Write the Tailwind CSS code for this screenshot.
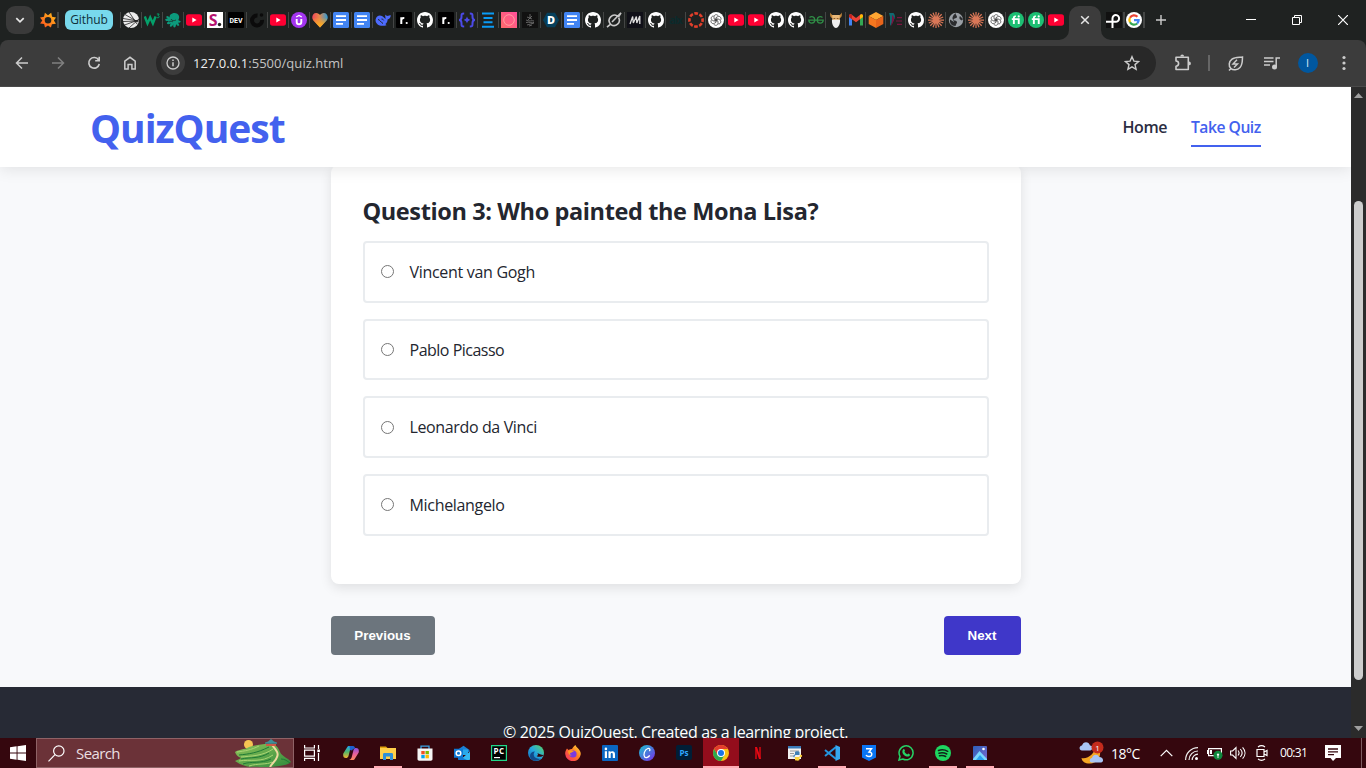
<!DOCTYPE html>
<html lang="en">
<head>
<meta charset="utf-8">
<title>QuizQuest</title>
<script src="https://cdn.jsdelivr.net/npm/@tailwindcss/browser@4"></script>
</head>
<body class="w-[1366px] h-[768px] overflow-hidden bg-[#f8f9fb] font-['Open_Sans',sans-serif]">
<svg class="absolute w-0 h-0">
  <defs>
  <linearGradient id="gOr" x1="0" y1="1" x2="1" y2="0"><stop offset="0" stop-color="#ff4b1f"/><stop offset="1" stop-color="#ffc21a"/></linearGradient>
  <linearGradient id="gHeart" x1="0" y1="0" x2="1" y2="0"><stop offset="0" stop-color="#f0465a"/><stop offset=".45" stop-color="#e8884a"/><stop offset="1" stop-color="#2b9bd8"/></linearGradient>
  <linearGradient id="gHeart2" x1="0" y1="0" x2="0" y2="1"><stop offset=".3" stop-color="#f9a825" stop-opacity="0"/><stop offset=".8" stop-color="#f9a825"/></linearGradient>
  <linearGradient id="gPink" x1="0" y1="1" x2="1" y2="0"><stop offset="0" stop-color="#ff6a6a"/><stop offset="1" stop-color="#ff4f9a"/></linearGradient>
  <linearGradient id="gEdge" x1="0" y1="1" x2="1" y2="0"><stop offset="0" stop-color="#1265b8"/><stop offset=".5" stop-color="#25a8e0"/><stop offset="1" stop-color="#5fd65a"/></linearGradient>
  <linearGradient id="gFox" x1="0" y1="1" x2="1" y2="0"><stop offset="0" stop-color="#f5246c"/><stop offset=".55" stop-color="#ff7a22"/><stop offset="1" stop-color="#ffe03a"/></linearGradient>
  <linearGradient id="gCanva" x1="0" y1="0" x2="1" y2="1"><stop offset="0" stop-color="#19c4cf"/><stop offset="1" stop-color="#7a2be8"/></linearGradient>
  <linearGradient id="gCopA" x1="0" y1="0" x2="0" y2="1"><stop offset="0" stop-color="#1ea7f2"/><stop offset=".5" stop-color="#52b56a"/><stop offset="1" stop-color="#f5b52e"/></linearGradient>
  <linearGradient id="gCopB" x1="0" y1="0" x2="0" y2="1"><stop offset="0" stop-color="#8a4fe0"/><stop offset=".5" stop-color="#e8609a"/><stop offset="1" stop-color="#ff8a5c"/></linearGradient>
  <linearGradient id="gPhoto" x1="0" y1="0" x2="1" y2="1"><stop offset="0" stop-color="#2b5fb8"/><stop offset="1" stop-color="#7a6ad0"/></linearGradient>
  <linearGradient id="gHill" x1="0" y1="0" x2="1" y2="1"><stop offset="0" stop-color="#8fc45a"/><stop offset="1" stop-color="#2f8a3c"/></linearGradient>
  </defs>
</svg>
<svg class="hidden">
  <symbol id="i-star" viewBox="0 0 16 16"><path fill="url(#gOr)" fill-rule="evenodd" d="M8 3.200 11.200.8l.9 4 3.900.7-2.100 2.900 2 3.400-4 .4-1 3.400L8 13.600l-3 2-.9-3.600-4-.4 2.200-3.200L0 5.500l4-.7.9-4zM8 5a3.300 3.300 0 1 0 0 6.600A3.300 3.300 0 0 0 8 5"/></symbol>
  <symbol id="i-ball" viewBox="0 0 16 16"><circle cx="8" cy="8" r="8" fill="#ececec"/><path stroke="#222" stroke-width=".8" fill="none" d="M0 6.500 15.500 9M2 2.500 15 10M6 0 14 12M0 9.500 15.500 9M1.500 13 15.500 8M6 16 16 7"/></symbol>
  <symbol id="i-w3" viewBox="0 0 16 16"><path fill="none" stroke="#04a06a" stroke-width="2.400" d="M.8 4.500 3.500 11.500 6.200 5.500 8.900 11.500 11.600 4.500"/><path fill="none" stroke="#04a06a" stroke-width="1" d="M12.800 2h2.400L14 3.600c1.600 0 1.600 2.400-.2 2.200l-1-.4"/></symbol>
  <symbol id="i-octo" viewBox="0 0 16 16"><path fill="#0c9a7c" d="M5.500 2.500C8 0 13 .5 14 4c.6 2-.4 3.200-.6 4 .2 1 2 .6 2.400 1.600-.4 1.400-2 1.200-2.800.8.2 1 1.600 1.800 1.200 3.200-1.400.8-2.600-.4-3-1.600-.4 1.200-.2 3-1.600 3.600-1.400 0-1.600-2-1.200-3.400-1 1.200-1.400 2.800-3 2.600-1.200-.8-.4-2.400.6-3.400-1.400.6-3 1.400-4 .4-.6-1.200.8-2.200 2.400-2.400C3 9 .8 9.600.2 8c-.2-1.400 1.600-1.400 2.800-1-.6-.8-2-1.200-1.600-2.600C2.400 3.200 3.800 4.600 4.600 5.600c0-1 0-2.200.9-3.100"/><path stroke="#1d2321" stroke-width=".7" fill="none" d="M6 7c1 2 3 2 5 1M4 10c1-1 3-1 4 0"/></symbol>
  <symbol id="i-yt" viewBox="0 0 16 16"><rect y="2.300" width="16" height="11.400" rx="2.600" fill="#ff0033"/><path d="M6.300 5.500v5L10.600 8z" fill="#fff"/></symbol>
  <symbol id="i-s" viewBox="0 0 16 16"><path fill="#fff" d="M0 0h16v16H0z"/><text x="1.800" y="13.800" font-family="Open Sans" font-weight="700" font-size="16" fill="#b5126f">S</text><circle cx="12.500" cy="12.500" r="1.700" fill="#222"/></symbol>
  <symbol id="i-dev" viewBox="0 0 16 16"><rect width="16" height="16" rx="1" fill="#000"/><text x="8" y="10.900" text-anchor="middle" textLength="13" lengthAdjust="spacingAndGlyphs" font-family="Roboto" font-weight="700" font-size="8" fill="#fff">DEV</text></symbol>
  <symbol id="i-c" viewBox="0 0 16 16"><path fill="none" stroke="#0b0b0b" stroke-width="4" d="M8.500 3.500A5 5 0 1 0 13 8"/><circle cx="12.500" cy="3" r="1.800" fill="#0b0b0b"/></symbol>
  <symbol id="i-ud" viewBox="0 0 16 16"><circle cx="8" cy="8" r="8" fill="#a435f0"/><path fill="none" stroke="#fff" stroke-width="1.900" d="M5.700 7v3a2.300 2.300 0 0 0 4.600 0V7"/><path fill="none" stroke="#fff" stroke-width="1.300" d="M5.200 5 8 3.400 10.800 5"/></symbol>
  <symbol id="i-heart" viewBox="0 0 16 16"><path fill="url(#gHeart)" d="M8 15.500 1.200 8.200C-1 5 1 1 4.200 1 6 1 7.300 2 8 3c.7-1 2-2 3.800-2C15 1 17 5 14.800 8.200z"/><path fill="url(#gHeart2)" d="M8 15.500 1.200 8.200C-1 5 1 1 4.200 1 6 1 7.300 2 8 3c.7-1 2-2 3.800-2C15 1 17 5 14.800 8.200z"/></symbol>
  <symbol id="i-doc" viewBox="0 0 16 16"><rect width="16" height="16" rx="1.500" fill="#4285f4"/><path fill="#fff" d="M3 3.200h10V5H3zm0 3.900h10v1.800H3zM3 11h7v1.800H3z"/></symbol>
  <symbol id="i-deep" viewBox="0 0 16 16"><path fill="#4d6bfe" d="M.6 7.500C1.200 4 4.500 2.500 7 4c1.500.9 2.600 2.200 3.500 3 .2-1.400-.6-2.600-.2-4.400 1 1.600 2 1.400 3 1.200.8-.2 1.400-.8 2.500-.4-.2 2.400-1.600 3.600-3.200 4 0 2-1 3.600-2.200 4.600l1.200 1.200c-3 .8-7 1-9.200-1C.8 10.800.4 9.200.6 7.500"/><path fill="none" stroke="#1d2321" d="M3 7.500c1.600 0 3 3 5 4M6.500 7c.9-.4 1.600.6 2.200 1.400"/></symbol>
  <symbol id="i-r" viewBox="0 0 16 16"><rect width="16" height="16" rx="1" fill="#000"/><path fill="none" stroke="#fff" stroke-width="2" d="M5.300 12V5.200M5.300 8c.2-1.400 1.200-2.100 3-2"/><circle cx="10.700" cy="11" r="1.100" fill="#fff"/></symbol>
  <symbol id="i-gh" viewBox="0 0 16 16"><path fill="#fff" d="M8 0C3.580 0 0 3.580 0 8c0 3.540 2.290 6.530 5.470 7.590.4.070.55-.17.55-.38 0-.19-.01-.82-.01-1.490-2.010.37-2.530-.49-2.690-.94-.09-.23-.48-.94-.82-1.130-.28-.15-.68-.52-.01-.53.630-.01 1.080.58 1.230.82.72 1.210 1.870.87 2.330.66.070-.52.280-.87.510-1.070-1.780-.2-3.640-.89-3.640-3.950 0-.87.310-1.590.82-2.150-.08-.2-.36-1.020.08-2.120 0 0 .67-.21 2.200.82.640-.18 1.320-.27 2-.27s1.360.09 2 .27c1.530-1.040 2.200-.82 2.200-.82.440 1.100.160 1.920.08 2.120.51.560.82 1.270.82 2.150 0 3.070-1.870 3.750-3.650 3.950.29.250.54.730.54 1.480 0 1.070-.01 1.930-.01 2.200 0 .21.150.46.550.38A8.010 8.010 0 0 0 16 8c0-4.420-3.580-8-8-8"/></symbol>
  <symbol id="i-br" viewBox="0 0 16 16"><path fill="none" stroke="#4c4ae8" stroke-width="2" d="M5.200 1.500c-3 0-2.700.9-2.700 3.500C2.500 7 2 7.600.5 8c1.500.4 2 1 2 3 0 2.600-.3 3.500 2.700 3.500M10.800 1.500c3 0 2.700.9 2.700 3.500 0 2 .5 2.600 2 3-1.500.4-2 1-2 3 0 2.600.3 3.500-2.700 3.500"/><path fill="#4c4ae8" d="M8 4.600c.7 2 1.200 2.700 3.400 3.400-2.200.7-2.700 1.400-3.400 3.400-.7-2-1.200-2.700-3.400-3.400 2.200-.7 2.700-1.400 3.400-3.400"/></symbol>
  <symbol id="i-bars" viewBox="0 0 16 16"><path stroke="#0a9bf5" stroke-width="2" d="M2 1.500h12M3.500 6h9M3.500 10.300h9M2 14.700h12"/></symbol>
  <symbol id="i-pink" viewBox="0 0 16 16"><path fill="url(#gPink)" d="M0 0h16v16H0z"/><circle cx="8" cy="8" r="5.300" fill="none" stroke="#ffa0a0"/></symbol>
  <symbol id="i-dark" viewBox="0 0 16 16"><path fill="#111" d="M0 0h16v16H0z"/><path fill="none" stroke="#777" stroke-width=".8" d="M8 2v4M5 5l5 2M10 4 6 8M4 8c3 2 6 0 8 1M4 10.500c3-1 6 1 8 0M5 13c2-1 5-1 7-2M7 14l3-1"/></symbol>
  <symbol id="i-d" viewBox="0 0 16 16"><path fill="#06405c" d="M4 .8h8L16 8l-4 7.200H4L0 8z"/><text x="8" y="12" text-anchor="middle" font-family="Open Sans" font-weight="800" font-size="11" fill="#fff">D</text></symbol>
  <symbol id="i-grok" viewBox="0 0 16 16"><path fill="none" stroke="#c8c8c8" stroke-width="1.600" d="M11.500 4.200A5.300 5.300 0 0 0 4.200 11.700M5 12.600A5.300 5.300 0 0 0 12.600 5.600M1 15.200l4.200-3.600M6 10 15 .8 12.400 5"/></symbol>
  <symbol id="i-m" viewBox="0 0 16 16"><path fill="#101018" d="M0 0h16v16H0z"/><path fill="none" stroke="#ddd" stroke-width="1.300" stroke-linejoin="bevel" d="M3 12 5.700 4.500l.6 6.500L9.400 4.500l.4 6.500L12.800 4v8"/></symbol>
  <symbol id="i-alx" viewBox="0 0 16 16"><text x="1" y="11.500" textLength="14" font-family="Open Sans" font-weight="700" font-size="11" fill="#0b2a2c">alx</text></symbol>
  <symbol id="i-canvas" viewBox="0 0 16 16"><circle cx="8" cy="8" r="6.600" fill="none" stroke="#e13f2b" stroke-width="2.600" stroke-dasharray="3.700 1.480" stroke-dashoffset="1.850"/></symbol>
  <symbol id="i-gpt" viewBox="0 0 16 16"><circle cx="8" cy="8" r="8" fill="#fff"/><g fill="none" stroke="#444" stroke-width=".75"><path id="pet" d="M6 6.800V4.900c0-2.600 3.600-3 4.200-.8M6 6.800l3.600 2.100"/><use href="#pet" transform="rotate(60 8 8)"/><use href="#pet" transform="rotate(120 8 8)"/><use href="#pet" transform="rotate(180 8 8)"/><use href="#pet" transform="rotate(240 8 8)"/><use href="#pet" transform="rotate(300 8 8)"/></g></symbol>
  <symbol id="i-gfg" viewBox="0 0 16 16"><path fill="none" stroke="#2f8d46" stroke-width="1.300" d="M1.500 5.500C3.500 4 6.800 4.700 6.800 8c0 4-5.800 4-6 .2h14.400c-.2 3.800-6 3.800-6-.2 0-3.300 3.300-4 5.300-2.500"/></symbol>
  <symbol id="i-beard" viewBox="0 0 16 16"><path fill="#c4873a" d="M2.500.5C3 3 5 3.500 8 3.500s5-.5 5.500-3C14.500 4 13 5.500 12 6H4C3 5.500 1.500 4 2.500.5"/><path fill="#e8b878" d="M4.300 3h7.400v7H4.300z"/><path fill="#8a5a2a" d="M5.500 6h1.800v1H5.500zm3.200 0h1.800v1H8.700z"/><path fill="#eee" d="M4 7.500c1.500 1 2.500.3 4 .3s2.500.7 4-.3c.5 4-1.500 8.500-4 8.500S3.500 11.500 4 7.500"/></symbol>
  <symbol id="i-gmail" viewBox="0 0 16 16"><path fill="#4285f4" d="M1 3.500v10h3V6.800z"/><path fill="#34a853" d="M15 3.500v10h-3V6.800z"/><path fill="#ea4335" d="M1 4c0-1.800 1.600-2.200 2.800-1.300L8 5.900l4.200-3.200C13.400 1.800 15 2.200 15 4v1L8 10.200 1 5z"/><path fill="#fbbc04" d="M12 2.900C13.400 1.800 15 2.400 15 4v1l-3 2.300z"/><path fill="#c5221f" d="M1 4c0-1.600 1.600-2.200 3-1.100v4.400L1 5z"/></symbol>
  <symbol id="i-cube" viewBox="0 0 16 16"><path fill="#ffa632" d="m8 0 7.300 4L8 8 .7 4z"/><path fill="#f5771f" d="M.7 4 8 8v8L.7 12z"/><path fill="#e8641a" d="M15.300 4 8 8v8l7.300-4z"/></symbol>
  <symbol id="i-p" viewBox="0 0 16 16"><path fill="#106a70" d="M1 1h4.500c2 2 2 5 0 7.500L2 14V5z"/><path fill="#7a1440" d="M4 3c3 2 3 5-1 11 1-5 1-8 1-11M9 5h5v1.200H9zm-1 3.400h6v1.200H8zm1 3.300h5v1.200H9z"/></symbol>
  <symbol id="i-claude" viewBox="0 0 16 16"><path stroke="#d97757" stroke-width="1.250" d="M8 0v16M0 8h16M2.300 2.300l11.400 11.400M13.700 2.300 2.300 13.700M5 .8l6 14.400M11 .8 5 15.200M.8 5l14.400 6M15.200 5 .8 11"/></symbol>
  <symbol id="i-globe" viewBox="0 0 16 16"><circle cx="8" cy="8" r="7.200" fill="#9aa0a6"/><path fill="#2a2c2e" d="M8 1c-1 2 1 2 1 4 0 1.500-3 1-3.500 2.500 0 1.500 3 .5 3.500 2.500 0 1.500-1 2-1.500 4C3 14 1.500 10.500 2 7.500L6 10c0-1-2-3-1.500-4.500C5 4 6 2 8 1M12 4c-1 1.500-1 3.500 2 4.500l1-1.500z"/></symbol>
  <symbol id="i-fi" viewBox="0 0 16 16"><circle cx="8" cy="8" r="8" fill="#1dbf73"/><path fill="#fff" d="M3.800 6.300h1.100c0-2 1-2.900 3-2.700v1.500c-.8-.1-1.100.2-1.100 1.200h4.900V12H9.800V7.900h-3V12H4.900V7.900H3.800z"/><circle cx="10.700" cy="4.400" r="1.100" fill="#fff"/></symbol>
  <symbol id="i-pp" viewBox="0 0 16 16"><path fill="#111" d="M0 0h16v16H0z"/><path fill="none" stroke="#fff" stroke-width="2" d="M0 9.700h9.500a3.300 3.300 0 1 0-3-3.300V16"/></symbol>
  <symbol id="i-g" viewBox="0 0 16 16"><circle cx="8" cy="8" r="8" fill="#fff"/><g fill="none" stroke-width="2.300"><path stroke="#ea4335" d="M4 5.700A4.700 4.700 0 0 1 11.400 4.700"/><path stroke="#fbbc05" d="M4 5.700a4.700 4.700 0 0 0 0 4.600"/><path stroke="#34a853" d="M4 10.300a4.700 4.700 0 0 0 7.200 1.200"/><path stroke="#4285f4" d="M11.200 11.500A4.700 4.700 0 0 0 12.600 8.200H8"/></g></symbol>
</svg>

<div class="flex flex-col h-[768px]">
  <!-- Tab strip -->
  <div class="h-10 shrink-0 bg-[#1f2221] flex items-center relative">
    <div class="ml-1.5 w-7 h-7 rounded-[9px] bg-[#3a3a3a] flex items-center justify-center">
      <svg class="w-3 h-3" viewBox="0 0 12 12"><path d="M2.300 4.200 6 7.900l3.700-3.700" fill="none" stroke="#e6e6e6" stroke-width="1.700"/></svg>
    </div>
    <svg class="ml-1.5 w-4 h-4"><use href="#i-star"/></svg>
    <div class="ml-px w-[1.500px] h-4 bg-[#444645]"></div>
    <div class="ml-[6.500px] w-12 h-5 rounded-md bg-[#78d9ec] flex items-center justify-center text-[12px] text-[#10303a] tracking-[-0.1px]">Github</div>
    <div class="ml-[6.500px] w-[1.500px] h-4 bg-[#444645]"></div>
    <div id="tabs" class="flex items-center"></div>
    <div class="ml-[3px] w-8 h-[34px] mt-1.5 rounded-t-[10px] bg-[#3c3c3c] flex items-center justify-center relative pb-1.5">
      <svg class="w-2.5 h-2.5" viewBox="0 0 10 10"><path d="m1.200 1.200 7.600 7.600m0-7.600L1.200 8.800" stroke="#e6e6e6" stroke-width="1.500"/></svg>
      <svg class="absolute bottom-0 w-2.5 h-2.5 left-[-10px]" viewBox="0 0 10 10"><path fill="#3c3c3c" d="M10 0v10H0A10 10 0 0 0 10 0"/></svg>
      <svg class="absolute bottom-0 w-2.5 h-2.5 right-[-10px]" viewBox="0 0 10 10"><path fill="#3c3c3c" d="M0 0v10h10A10 10 0 0 1 0 0"/></svg>
    </div>
    <svg class="ml-[5px] w-4 h-4"><use href="#i-pp"/></svg>
    <div class="ml-px w-[1.500px] h-4 bg-[#444645]"></div>
    <svg class="ml-px w-4 h-4"><use href="#i-g"/></svg>
    <div class="ml-[1.500px] w-[1.500px] h-4 bg-[#444645]"></div>
    <svg class="ml-[11px] w-2.5 h-2.5" viewBox="0 0 10 10"><path d="M5 0v10M0 5h10" stroke="#ccc" stroke-width="1.400"/></svg>
    <div class="ml-auto flex items-center pr-[18px] gap-[36px]">
      <svg class="w-2.5 h-2.5" viewBox="0 0 10 10"><path d="M0 4.500h10" stroke="#fff"/></svg>
      <svg class="w-2.5 h-2.5" viewBox="0 0 10 10"><path d="M.5 2.500h7v7h-7zM2.500 2.500v-2h7v7h-2" fill="none" stroke="#fff"/></svg>
      <svg class="w-2.5 h-2.5" viewBox="0 0 10 10"><path d="m0 0 10 10M10 0 0 10" stroke="#fff" stroke-width="1.200"/></svg>
    </div>
  </div>
  <!-- Toolbar -->
  <div class="bg-[#1f2221] shrink-0"><div class="h-[47px] bg-[#3c3c3c] rounded-t-[8px] border-b border-[#4a4a4a] flex items-center">
    <svg class="ml-[15px] w-3.5 h-3.5" viewBox="0 0 14 14"><path d="M13 7H2M7 1.500 1.500 7 7 12.500" fill="none" stroke="#ccc" stroke-width="1.500"/></svg>
    <svg class="ml-[22px] w-3.5 h-3.5" viewBox="0 0 14 14"><path d="M1 7h11M7 1.500 12.500 7 7 12.500" fill="none" stroke="#808080" stroke-width="1.500"/></svg>
    <svg class="ml-[22px] w-3.5 h-3.5" viewBox="0 0 14 14"><path d="M11.600 4A5.300 5.300 0 1 0 12.300 8M12.200.8v4H8.200" fill="none" stroke="#ccc" stroke-width="1.600"/></svg>
    <svg class="ml-[22px] w-3.5 h-3.5" viewBox="0 0 14 14"><path d="M1.800 5.200 7 1.300l5.200 3.900V13H8.900V8.500H5.100V13H1.800z" fill="none" stroke="#ccc" stroke-width="1.500"/></svg>
    <div class="ml-[19px] w-[1000px] h-[34px] rounded-full bg-[#282828] flex items-center pl-[5px] pr-4">
      <div class="w-6 h-6 rounded-full bg-[#3c3c3c] flex items-center justify-center"><svg class="w-3.5 h-3.5" viewBox="0 0 14 14"><circle cx="7" cy="7" r="6" fill="none" stroke="#ccc" stroke-width="1.300"/><path d="M7 6.200v4M7 3.400v1.500" stroke="#ccc" stroke-width="1.500"/></svg></div>
      <div class="ml-2 pt-[2px] text-[13px] text-[#c4c4c4] whitespace-nowrap tracking-[0.04px]"><span class="text-[#eee]">127.0.0.1</span>:5500/quiz.html</div>
      <svg class="ml-auto w-4 h-4" viewBox="0 0 16 16"><path d="m8 1.700 1.900 4.400 4.700.4-3.600 3.100 1.100 4.700L8 11.800l-4.100 2.500L5 9.600 1.400 6.500l4.700-.4z" fill="none" stroke="#ccc" stroke-width="1.400"/></svg>
    </div>
    <svg class="ml-[18px] w-[18px] h-[18px]" viewBox="0 0 18 18"><path d="M2 3.200h12.300v12.300H2v-3.300a2.400 2.400 0 0 0 0-5.200z" fill="none" stroke="#ccc" stroke-width="1.600" stroke-linejoin="round"/><path fill="#ccc" d="M6.300 2.500a1.900 1.900 0 0 1 3.800 0zM15 7.500a1.900 1.900 0 0 1 0 3.800z"/></svg>
    <div class="ml-[16px] w-[1.500px] h-4 bg-[#666]"></div>
    <svg class="ml-[17px] w-[17px] h-[17px]" viewBox="0 0 17 17"><path d="M2 15.500 4 13.500C1 11 2 6.500 5 4.200 8 2 12 2.500 15.500 2c-.2 3.500.2 7.500-2.500 10.500-2.500 2.800-7 3-9 1z" fill="none" stroke="#ccc" stroke-width="1.500"/><path d="M10 4.800 6 9h4.500L7 12.600" fill="none" stroke="#ccc" stroke-width="1.400"/></svg>
    <svg class="ml-[20px] w-4 h-4" viewBox="0 0 16 16"><path d="M0 3h9.500M0 6.500h9.500M0 10h6M12.200 12V3H16" fill="none" stroke="#ccc" stroke-width="1.500"/><circle cx="10.500" cy="12" r="2.500" fill="#ccc"/></svg>
    <div class="ml-[18px] w-5 h-5 rounded-full bg-[#00579f] text-[#d5e6f5] text-[11px] flex items-center justify-center">I</div>
    <svg class="ml-[24px] w-1 h-4" viewBox="0 0 4 16"><g fill="#ccc"><circle cx="2" cy="2.500" r="1.600"/><circle cx="2" cy="8" r="1.600"/><circle cx="2" cy="13.500" r="1.600"/></g></svg>
  </div></div>

  <!-- Web page -->
  <div class="flex h-[651px] shrink-0">
    <div class="w-[1351px] h-full overflow-hidden flex flex-col">
      <header class="h-20 shrink-0 bg-white shadow-[0_2px_15px_rgba(0,0,0,0.1)] relative z-10 flex items-center justify-between px-[90px]">
        <div class="text-[39px] leading-[60px] font-bold text-[#4361ee] mt-px tracking-[-1px]">QuizQuest</div>
        <nav class="flex gap-6 text-[16px] font-semibold leading-6">
          <a class="text-[#2b2d42] w-[44.500px] whitespace-nowrap pb-[6px] pt-2 tracking-[-0.4px]">Home</a>
          <a class="text-[#4361ee] w-[70px] whitespace-nowrap border-b-2 border-[#4361ee] pb-[6px] pt-2 text-[15.700px] tracking-[-0.500px]">Take Quiz</a>
        </nav>
      </header>
      <main class="h-[520px] shrink-0 pl-[331px] pr-[330px] flex flex-col bg-[#f8f9fb]">
        <section class="-mt-[2px] h-[419px] rounded-lg bg-white shadow-[0_4px_12px_rgba(0,0,0,0.1)] p-8">
          <h2 class="h-7 mb-[16.200px] -ml-[0.500px] leading-[29px] text-[23.500px] tracking-[-0.390px] font-bold text-[#23262f] whitespace-nowrap">Question 3: Who painted the Mona Lisa?</h2>
          <div class="flex flex-col gap-4 text-[16px] text-[#23262f]">
            <label class="h-[61.600px] border-2 border-[#e9ecef] rounded flex items-center pl-4"><i class="w-[13px] h-[13px] rounded-full border border-[#767676]"></i><span class="ml-[15.500px] pt-px tracking-[-0.300px]">Vincent van Gogh</span></label>
            <label class="h-[61.600px] border-2 border-[#e9ecef] rounded flex items-center pl-4"><i class="w-[13px] h-[13px] rounded-full border border-[#767676]"></i><span class="ml-[15.500px] pt-px tracking-[-0.500px]">Pablo Picasso</span></label>
            <label class="h-[61.600px] border-2 border-[#e9ecef] rounded flex items-center pl-4"><i class="w-[13px] h-[13px] rounded-full border border-[#767676]"></i><span class="ml-[15.500px] tracking-[-0.370px]">Leonardo da Vinci</span></label>
            <label class="h-[61.600px] border-2 border-[#e9ecef] rounded flex items-center pl-4"><i class="w-[13px] h-[13px] rounded-full border border-[#767676]"></i><span class="ml-[15.500px] pt-px tracking-[-0.320px]">Michelangelo</span></label>
          </div>
        </section>
        <div class="mt-8 flex justify-between font-['Liberation_Sans',sans-serif] font-bold text-[13.333px] text-white">
          <button class="w-[104px] h-[39px] rounded bg-[#6c757d] pr-px">Previous</button>
          <button class="w-[77px] h-[39px] rounded bg-[#3f37c9] pr-px">Next</button>
        </div>
      </main>
      <footer class="grow bg-[#272a35] text-white text-[16px] leading-6 pt-8 flex justify-center whitespace-nowrap"><p class="mt-[1px] tracking-[-0.380px]">© 2025 QuizQuest. Created as a learning project.</p></footer>
    </div>
    <div class="w-[15px] h-full bg-[#2b2b2b] flex flex-col items-center">
      <svg class="mt-[6px] w-[9px] h-[5px]" viewBox="0 0 9 5"><path fill="#9f9f9f" d="M4.500 0 9 5H0z"/></svg>
      <div class="mt-[103px] w-[9px] h-[479px] rounded-full bg-[#cdcdcd]"></div>
      <svg class="mt-auto mb-[7px] w-[9px] h-[5px]" viewBox="0 0 9 5"><path fill="#9f9f9f" d="M4.500 5 9 0H0z"/></svg>
    </div>
  </div>

  <!-- Taskbar -->
  <div class="h-[30px] shrink-0 bg-[#35070e] flex items-center">
    <svg class="ml-[10px] w-4 h-4" viewBox="0 0 16 16"><path fill="#fff" d="M0 2.200 6.600 1.300v6.200H0zM7.500 1.200 16 0v7.500H7.500zM0 8.500h6.600v6.200L0 13.800zm7.500 0H16V16l-8.500-1.200z"/></svg>
    <div class="ml-[10px] w-[258px] h-[30px] bg-[#6b3238] border border-[#8f6266] flex items-center">
      <svg class="ml-[11px] w-[17px] h-[17px]" viewBox="0 0 17 17"><circle cx="10.800" cy="6" r="5.200" fill="none" stroke="#fff" stroke-width="1.200"/><path d="M7 9.700.5 16.300" stroke="#fff" stroke-width="1.200"/></svg>
      <div class="ml-[11px] text-[15px] text-[#eadfe0] tracking-[-0.600px]">Search</div>
      <svg class="ml-auto mr-px w-[57px] h-7" viewBox="0 0 57 28"><circle cx="13.500" cy="5.500" r="4.500" fill="#f6c453"/><path fill="url(#gHill)" d="M0 13c4-3 9-2 14-5 7-2 12-3 20-3 6-1 9 3 11 8 2 5 9 6 11 10-3 3-11 4-19 5-9 1-15-1-22 0-6-1-11-3-15-6 2-1 5-2 6-3-3-1-5-3-6-6"/><path fill="none" stroke="#a9d474" stroke-width="1" d="M2 13c8-1 14-2 22-6M6 18c10-1 22-1 32-8M4 22c12-2 22 2 34-6M14 27c9-3 18-1 23-4"/><path fill="none" stroke="#1f7a36" stroke-width="1" d="M4 16c10-1 18-2 30-8M6 20c10-2 18 0 28-6M8 25c8-3 18 0 28-5M46 20c4 0 6 2 9 4"/><path fill="none" stroke="#efd9a0" stroke-width="2" d="M37 6c4 5 7 8 5 12-1 4-5 6-7 10"/><path fill="#cf5a44" d="M31 5h10v2H31z"/><path fill="#3d8f97" d="m30 3.500 3-1L36 0l3 2.500 3 1v1.200H30z"/></svg>
    </div>
    <svg class="ml-[10px] w-4 h-4" viewBox="0 0 16 16"><path d="M.6 0v3h9.800V0M.6 16v-2.600h9.800V16M.6 5.200h9.800v6H.6zM14.500 0v4M14.500 8v8" fill="none" stroke="#fff" stroke-width="1.200"/><path d="M13.300 4.500h2.600v2.600h-2.600z" fill="#fff"/></svg>
    <div class="ml-[12px] flex h-[30px]">
      <div class="w-[37px] flex items-center justify-center"><svg class="w-4 h-4" viewBox="0 0 16 16"><path fill="url(#gCopA)" d="M4 2.500C4.500 1 5.500 1 6 1h4C8 1.500 7.500 3 7 5L5.500 11c-.5 1.500-1.500 2-2.500 2C.5 13-.2 11 .3 8.500z"/><path fill="url(#gCopB)" d="M12 13.500c-.5 1.500-1.500 1.500-2 1.500H6c2-.5 2.500-2 3-4l1.500-6c.5-1.500 1.500-2 2.500-2 2.500 0 3.200 2 2.700 4.500z"/><path fill="#1b5fd0" d="M6.500 1H10c1.500 0 1.700 1.200 2.200 2.500-2 0-2.700 1-3.200 2L7 5z"/></svg></div>
      <div class="w-[37px] flex items-center justify-center relative"><svg class="w-4 h-4" viewBox="0 0 16 16"><path fill="#e3a30c" d="M0 1.500h6L7.500 3H0z"/><path fill="#ffcf4a" d="M0 3h16v11H0z"/><path fill="#2f8fd8" d="M3 15V9.500C3 8.500 3.500 8 4.500 8h7c1 0 1.500.5 1.500 1.500V15h-3v-3.500H6V15z"/></svg><div class="absolute bottom-0 w-7 h-[2px] bg-[#ffabb4]"></div></div>
      <div class="w-[37px] flex items-center justify-center"><svg class="w-4 h-4" viewBox="0 0 16 16"><path fill="none" stroke="#3aa5e8" stroke-width="1.300" d="M4 4V1.200h8V4"/><path fill="#f5f5f5" d="M.5 3.500h15V14c0 1.200-.6 1.700-1.700 1.700H2.200C1.100 15.700.5 15.200.5 14z"/><path fill="#f25022" d="M4.300 6h3.400v3.300H4.300z"/><path fill="#7fba00" d="M8.500 6h3.400v3.300H8.500z"/><path fill="#00a4ef" d="M4.300 10h3.400v3.300H4.300z"/><path fill="#ffb900" d="M8.500 10h3.400v3.300H8.500z"/></svg></div>
      <div class="w-[37px] flex items-center justify-center"><svg class="w-4 h-4" viewBox="0 0 16 16"><path fill="#1a7fd4" d="m9.500.8 6 4.200V7H4V4.500z"/><path fill="#28a8ea" d="M5 4.500h9V10H5z"/><path fill="#35b8f1" d="M16 6.500V14c0 .8-.4 1-1 1H6z"/><path fill="#0f78d4" d="M4 10.500 13 15H5c-.7 0-1-.4-1-1zM0 3.700h9v9H0z"/><circle cx="4.500" cy="8.200" r="2.300" fill="none" stroke="#fff" stroke-width="1.500"/></svg></div>
      <div class="w-[37px] flex items-center justify-center"><svg class="w-4 h-4" viewBox="0 0 16 16"><path fill="#000" stroke="#21d789" stroke-width="1.200" d="M.6.6h14.800v14.800H.6z"/><text x="2.500" y="9" font-family="Open Sans" font-weight="700" font-size="8" textLength="10.500" fill="#fff">PC</text><path fill="#fff" d="M3 12h6v1.200H3z"/></svg></div>
      <div class="w-[37px] flex items-center justify-center"><svg class="w-4 h-4" viewBox="0 0 16 16"><circle cx="8" cy="8" r="8" fill="url(#gEdge)"/><path fill="#35070e" d="M9.500 8c1 2 0 3-1 3 2 1.500 5.500 1 7.500-1-1 .5-7-2-6.500-2"/><path fill="#114a8b" d="M5.800 8.500C5 12 8 14.500 13 13.500 9 17 4 16 2.500 13 1 10 3 6.500 7 6.500c-.7.500-1 1.200-1.200 2"/></svg></div>
      <div class="w-[37px] flex items-center justify-center"><svg class="w-4 h-4" viewBox="0 0 16 16"><path fill="url(#gFox)" d="M2 3.500 3.500 5C5 4 6 4 7 4c1-2 2-3 3.500-4 .5 2 2 2.500 3.500 4.500C15 6 16 7.500 15.700 9.500A7.800 7.800 0 0 1 .2 9C0 7 1 5 2 3.500"/><circle cx="8" cy="9" r="3.600" fill="#7a3ae0"/><path fill="#ff9a1f" d="M3 6c2-1 4-1 6 .5-2 0-2 1.500-4 1.500 0 1.500 1 2.500 2 3-3-.5-4-3-4-5"/></svg></div>
      <div class="w-[37px] flex items-center justify-center"><svg class="w-4 h-4" viewBox="0 0 16 16"><rect width="16" height="16" rx="1" fill="#0a66c2"/><path fill="#fff" d="M2.800 6.200H5V13H2.800zM6.500 6.200h2v1C9.500 5.700 13 5.500 13 9v4h-2.200V9.500c0-2-2.100-1.800-2.100 0V13H6.500z"/><circle cx="3.900" cy="3.900" r="1.300" fill="#fff"/></svg></div>
      <div class="w-[37px] flex items-center justify-center"><svg class="w-4 h-4" viewBox="0 0 16 16"><circle cx="8" cy="8" r="8" fill="url(#gCanva)"/><path fill="none" stroke="#fff" stroke-width="1.300" d="M10.300 6c1.500-1.500.2-3-1.500-2.500C5.500 4.500 4 10 5.700 12c1.300 1.200 3.800.3 5-1.700"/></svg></div>
      <div class="w-[38px] flex items-center justify-center"><svg class="w-4 h-4" viewBox="0 0 16 16"><rect width="16" height="15" rx="2" fill="#001e36"/><text x="8" y="11" text-anchor="middle" font-family="Open Sans" font-weight="700" font-size="8" fill="#31a8ff">Ps</text></svg></div>
      <div class="w-[36px] flex items-center justify-center relative bg-[#930d1c]"><svg class="w-4 h-4" viewBox="0 0 16 16"><circle cx="8" cy="8" r="8" fill="#fbc116"/><path fill="#e33b2e" d="M1.100 4A8 8 0 0 1 14.900 4H8L4.500 10z"/><path fill="#2da94f" d="M1.100 4A8 8 0 0 0 8 16l3.500-6H4.500z"/><circle cx="8" cy="8" r="4" fill="#fff"/><circle cx="8" cy="8" r="3" fill="#1a73e8"/></svg><div class="absolute bottom-0 w-full h-[2px] bg-[#ffabb4]"></div></div>
      <div class="w-[37px] flex items-center justify-center"><svg class="w-4 h-4" viewBox="0 0 16 16"><path fill="#b1060f" d="M5 2h2v12H5zM9 2h2v12H9z"/><path fill="#e50914" d="M5 2h2l4 12H9z"/></svg></div>
      <div class="w-[37px] flex items-center justify-center"><svg class="w-4 h-4" viewBox="0 0 16 16"><path fill="#f2f2f2" d="M1 1h13v13H1z"/><path fill="#3a7ab8" d="M1 1h13v2.500H1z"/><path stroke="#999" d="M3 6h9M3 8.500h4M3 11h3"/><path fill="#3f7fb5" d="M8 9.500V7.200C8 6 12.500 6 12.500 7.200V10H9c-1.500 0-1.500 1.500-1.500 2.500C5.500 12.500 6 9.500 8 9.500"/><path fill="#ffd43b" d="M12.500 12.500v2.300c0 1.200-4.500 1.200-4.500 0V12h3.500c1.500 0 1.500-1.500 1.500-2.500 3 0 3 3-.5 3"/></svg></div>
      <div class="w-[37px] flex items-center justify-center relative"><svg class="w-4 h-4" viewBox="0 0 16 16"><path fill="none" stroke="#2496e0" stroke-width="2" d="M12 2 1 11M12 14 1 5"/><path fill="#35a8f0" d="m11.500 0 4.500 2v12l-4.500 2z"/></svg><div class="absolute bottom-0 w-7 h-[2px] bg-[#ffabb4]"></div></div>
      <div class="w-[37px] flex items-center justify-center"><svg class="w-4 h-4" viewBox="0 0 16 16"><path fill="#0a75f5" d="M1 0h14v12.500L8 16l-7-3.500z"/><path fill="none" stroke="#fff" stroke-width="1.400" d="M5 3.800h5.500L8 7c4 0 3.500 4.500 0 4.500-1.500 0-2.500-.5-3-1.500"/></svg></div>
      <div class="w-[37px] flex items-center justify-center"><svg class="w-4 h-4" viewBox="0 0 16 16"><path fill="none" stroke="#25d366" stroke-width="1.500" d="m1 15 1-3.700A7 7 0 1 1 4.800 14z"/><path fill="#25d366" d="M5 4.500c1-1 1.300-.5 2 1.200l-.6 1c.6 1.200 1.600 2.100 2.900 2.700l.9-1c1.600.7 2.100 1 1.600 2-1.300 2.700-8 .1-7.400-4.500z"/></svg></div>
      <div class="w-[37px] flex items-center justify-center relative"><svg class="w-4 h-4" viewBox="0 0 16 16"><circle cx="8" cy="8" r="8" fill="#1ed760"/><path fill="none" stroke="#10251a" stroke-width="1.500" stroke-linecap="round" d="M3.500 5.500c3-1 6.500-.7 9.200.8M4 8.200c2.700-.8 5.300-.5 7.800.8M4.500 10.800c2.200-.6 4.200-.4 6.200.7"/></svg><div class="absolute bottom-0 w-7 h-[2px] bg-[#ffabb4]"></div></div>
      <div class="w-[37px] flex items-center justify-center relative"><svg class="w-4 h-4" viewBox="0 0 16 16"><rect x="1" y="1" width="14" height="14" rx="1" fill="url(#gPhoto)"/><path fill="#7ad8ff" d="M1 14 7.500 6 15 14v1H1z"/><path fill="#2aa0f0" d="m4 15 4-5 4.500 5z"/><circle cx="11.500" cy="4" r="1.300" fill="#fff"/></svg><div class="absolute bottom-0 w-7 h-[2px] bg-[#ffabb4]"></div></div>
    </div>
    <div class="ml-auto flex items-center text-white h-[30px]">
      <svg class="w-[25px] h-[24px]" viewBox="0 0 25 24"><path fill="#f5a623" d="M17 3c7 6 5 18-5 19.500C7 23 3 21 2.500 17c6 1.500 14-4 14.500-14"/><path fill="#a9c6f5" d="M3 9.500c-3 0-3.500-4.500 0-5C4 0 10 0 11 4.500c3.500 0 3 5 0 5zM13 21.500c-3 0-3-4 0-4.500 1-4 6-4 7-1 5 0 5 5.500 2 5.500z"/><circle cx="18.500" cy="6.500" r="6" fill="#c42b1c"/><text x="18.500" y="9.500" text-anchor="middle" font-family="Open Sans" font-size="8" fill="#fff">1</text></svg>
      <div class="ml-[7px] w-[31px] text-[14px] whitespace-nowrap tracking-[-0.500px]">18°C</div>
      <svg class="ml-[18px] w-[13px] h-[8px]" viewBox="0 0 13 8"><path d="M.7 7.200 6.500 1.400l5.800 5.800" fill="none" stroke="#fff" stroke-width="1.200"/></svg>
      <svg class="ml-[12px] w-[13px] h-[13px]" viewBox="0 0 13 13"><g fill="none" stroke="#eee" stroke-width="1.200"><path d="M.6 13A12.400 12.400 0 0 1 13 .6M4 13a9 9 0 0 1 9-9M7.200 13A5.800 5.800 0 0 1 13 7.200"/></g><circle cx="11.500" cy="11.500" r="1.500" fill="#fff"/></svg>
      <svg class="ml-[9px] w-4 h-[14px]" viewBox="0 0 16 14"><path d="M1.600 2.600h12.800v7H1.600zM.5 4v4" fill="none" stroke="#fff" stroke-width="1.200"/><path fill="#fff" d="M3 4h2v4H3z"/><circle cx="11" cy="9.200" r="4.500" fill="#10893e"/><path d="M11 12V8.500M10 9l1-1.300L12 9z" fill="#fff" stroke="#fff" stroke-width=".9"/></svg>
      <svg class="ml-[7px] w-4 h-[14px]" viewBox="0 0 16 14"><path d="M.6 5h2L6 1.500v11L2.600 9h-2zM8 4.500c1.300 1.500 1.300 3.500 0 5M10.300 3c2.300 2.500 2.300 5.500 0 8M12.600 1.300c3.200 3.500 3.200 8 0 11.400" fill="none" stroke="#fff" stroke-width="1.100"/></svg>
      <svg class="ml-[10px] w-3 h-4" viewBox="0 0 12 16"><path d="M1 4.500h7v7H1zM8 7l3-1.500v5L8 9M2 2c2-1.500 5-1.500 7 0M2 14c2 1.500 5 1.500 7 0" fill="none" stroke="#fff" stroke-width="1.200"/></svg>
      <div class="ml-[12px] w-[27px] text-[12px] whitespace-nowrap tracking-[-0.700px]">00:31</div>
      <svg class="ml-[18px] w-4 h-4" viewBox="0 0 16 16"><path fill="#fff" d="M0 0h16v13h-5l-3 3-2.500-3H0z"/><path stroke="#35070e" stroke-width="1.300" d="M3 4h10M3 6.800h10M3 9.600h6"/></svg>
      <div class="ml-[20px] mr-1 w-px h-[30px] bg-[#7d5b60]"></div>
    </div>
  </div>
</div>
<script>
const icons = "ball w3 octo yt s dev c yt ud heart doc doc deep r gh r br bars pink dark d doc gh grok m gh alx canvas gpt yt yt gh gh gfg beard gmail cube p gh claude globe claude gpt fi fi yt".split(" ");
document.getElementById("tabs").innerHTML = icons.map((n, i) =>
  `<div class="${i < 25 ? "w-[21px]" : "w-[20px]"} flex items-center justify-between pl-[2px]"><svg class="w-4 h-4"><use href="#i-${n}"/></svg>${i < icons.length - 1 ? '<div class="w-[1.500px] h-4 bg-[#444645]"></div>' : ""}</div>`).join("");
</script>
</body>
</html>
